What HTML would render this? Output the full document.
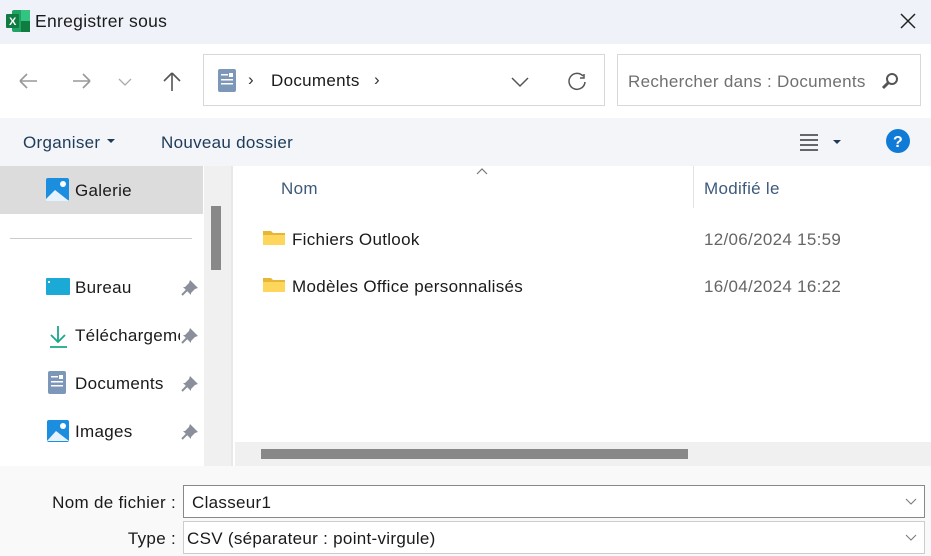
<!DOCTYPE html><html><head><meta charset="utf-8"><style>
*{margin:0;padding:0;box-sizing:border-box}
body{width:931px;height:556px;position:relative;overflow:hidden;font-family:"Liberation Sans",sans-serif;font-size:17px;letter-spacing:0.3px;color:#1a1a1a;background:#fff}
.a{position:absolute;white-space:nowrap}
</style></head><body>
<div class="a" style="left:0;top:0;width:931px;height:44px;background:#eff3f9"></div>
<svg class="a" style="left:6px;top:10px" width="24" height="22"><rect x="6" y="0" width="18" height="22" rx="2" fill="#21a366"/><rect x="15" y="0" width="9" height="11" fill="#33c481"/><rect x="15" y="11" width="9" height="11" fill="#107c41"/><rect x="0" y="4" width="13" height="14" rx="1" fill="#107c41"/><text x="3" y="15" font-size="11" font-weight="bold" fill="#fff" font-family="Liberation Sans">X</text></svg>
<div class="a" style="left:35px;top:11px;font-size:17.5px">Enregistrer sous</div>
<svg class="a" style="left:900px;top:13px" width="16" height="16"><path d="M1 1L15 15M15 1L1 15" stroke="#222" stroke-width="1.5"/></svg>
<svg class="a" style="left:16px;top:70px" width="180" height="24" fill="none" stroke-width="1.6"><path d="M4 11H21M4 11L11 4M4 11L11 18" stroke="#999"/><path d="M57 11H74M74 11L67 4M74 11L67 18" stroke="#999"/><path d="M103 9L109 15L115 9" stroke="#aaa" stroke-width="1.3"/><path d="M156 3V21M156 3L148 11M156 3L164 11" stroke="#555"/></svg>
<div class="a" style="left:203px;top:54px;width:402px;height:52px;border:1px solid #d8d8d8"></div>
<svg class="a" style="left:218px;top:69px" width="20" height="24"><rect x="0" y="0" width="18" height="23" rx="2" fill="#7d97b8"/><rect x="3" y="5" width="7" height="1.5" fill="#fff"/><rect x="11" y="4" width="4" height="4" fill="#fff"/><rect x="3" y="10" width="12" height="1.5" fill="#fff"/><rect x="3" y="14" width="12" height="1.5" fill="#fff"/></svg>
<div class="a" style="left:248px;top:70px;color:#333">›</div>
<div class="a" style="left:271px;top:71px">Documents</div>
<div class="a" style="left:374px;top:70px;color:#333">›</div>
<svg class="a" style="left:510px;top:72px" width="80" height="20" fill="none" stroke="#555" stroke-width="1.5"><path d="M2 6L10 14L18 6"/><path d="M73 4A8 8 0 1 0 75 10M74 2V6H70"/></svg>
<div class="a" style="left:617px;top:54px;width:304px;height:52px;border:1px solid #d8d8d8"></div>
<div class="a" style="left:628px;top:72px;color:#707070">Rechercher dans : Documents</div>
<svg class="a" style="left:881px;top:72px" width="20" height="20"><circle cx="11" cy="7" r="5" fill="none" stroke="#555" stroke-width="2"/><path d="M8 10L2 16" stroke="#555" stroke-width="3"/></svg>
<div class="a" style="left:0;top:118px;width:931px;height:48px;background:#f3f5f8"></div>
<div class="a" style="left:23px;top:133px;color:#1e3b5a">Organiser</div>
<svg class="a" style="left:107px;top:139px" width="10" height="6"><path d="M0 0H8L4 4Z" fill="#1e3b5a"/></svg>
<div class="a" style="left:161px;top:133px;color:#1e3b5a">Nouveau dossier</div>
<svg class="a" style="left:799px;top:132px" width="48" height="20"><path d="M1 3H19M1 8H19M1 13H19M1 18H19" stroke="#111" stroke-width="1.2"/><path d="M34 8H42L38 12Z" fill="#1e3b5a"/></svg>
<svg class="a" style="left:886px;top:129px" width="24" height="24"><circle cx="12" cy="12" r="12" fill="#0f7bd6"/><text x="7" y="18" font-size="16" font-weight="bold" fill="#fff" font-family="Liberation Sans">?</text></svg>
<div class="a" style="left:0;top:166px;width:203px;height:48px;background:#dcdcdc"></div>
<svg class="a" style="left:46px;top:178px" width="24" height="25"><rect x="0" y="0" width="23" height="23" rx="2" fill="#1b8ee0"/><path d="M0 21L9 12L23 23H0Z" fill="#e6f3ff"/><circle cx="17" cy="6" r="3" fill="#fff"/></svg>
<div class="a" style="left:75px;top:181px">Galerie</div>
<div class="a" style="left:10px;top:238px;width:182px;height:1px;background:#ccc"></div>
<div class="a" style="left:204px;top:166px;width:27px;height:300px;background:#f0f0f0"></div>
<div class="a" style="left:211px;top:206px;width:10px;height:64px;background:#888"></div>
<div class="a" style="left:231px;top:166px;width:2px;height:300px;background:#e8e8e8"></div>
<svg class="a" style="left:46px;top:278px" width="24" height="18"><rect width="24" height="17" rx="1" fill="#1ba9d6"/><rect x="2" y="3" width="2" height="2" fill="#fff"/></svg>
<div class="a" style="left:75px;top:278px">Bureau</div>
<svg class="a" style="left:49px;top:325px" width="20" height="24" fill="none" stroke="#1aa88a" stroke-width="1.8"><path d="M9 1V17M2 10L9 17L16 10M1 22H18"/></svg>
<div class="a" style="left:75px;top:326px;width:105px;overflow:hidden">Téléchargements</div>
<svg class="a" style="left:48px;top:371px" width="20" height="24"><rect x="0" y="0" width="18" height="23" rx="2" fill="#7d97b8"/><rect x="3" y="5" width="7" height="1.5" fill="#fff"/><rect x="11" y="4" width="4" height="4" fill="#fff"/><rect x="3" y="10" width="12" height="1.5" fill="#fff"/><rect x="3" y="14" width="12" height="1.5" fill="#fff"/></svg>
<div class="a" style="left:75px;top:374px">Documents</div>
<svg class="a" style="left:47px;top:420px" width="22" height="22"><rect width="22" height="22" rx="2" fill="#1b8ee0"/><path d="M0 21L9 11L22 21Z" fill="#e6f3ff"/><circle cx="16" cy="6" r="3" fill="#fff"/></svg>
<div class="a" style="left:75px;top:422px">Images</div>
<svg class="a" style="left:181px;top:278px" width="20" height="170" fill="#8a9099"><g id="p"><path d="M9 2L17 10L14 11L10 15L10 17L2 9L4 9L8 5Z"/><path d="M6 12L1 17" stroke="#8a9099" stroke-width="2"/></g><use href="#p" y="48"/><use href="#p" y="96"/><use href="#p" y="144"/></svg>
<svg class="a" style="left:476px;top:168px" width="12" height="8"><path d="M1 6L6 1L11 6" fill="none" stroke="#777" stroke-width="1.2"/></svg>
<div class="a" style="left:281px;top:179px;color:#3d5a7a">Nom</div>
<div class="a" style="left:693px;top:166px;width:1px;height:42px;background:#e3e3e3"></div>
<div class="a" style="left:704px;top:179px;color:#3d5a7a">Modifié le</div>
<svg class="a" style="left:263px;top:229px" width="24" height="70"><g id="f"><path d="M0 2H8L10 4H22V16H0Z" fill="#e8b636"/><path d="M0 6H22V16H0Z" fill="#ffd65c"/></g><use href="#f" y="47"/></svg>
<div class="a" style="left:292px;top:230px">Fichiers Outlook</div>
<div class="a" style="left:704px;top:230px;color:#666">12/06/2024 15:59</div>
<div class="a" style="left:292px;top:277px">Modèles Office personnalisés</div>
<div class="a" style="left:704px;top:277px;color:#666">16/04/2024 16:22</div>
<div class="a" style="left:235px;top:442px;width:696px;height:24px;background:#f0f0f0"></div>
<div class="a" style="left:261px;top:449px;width:427px;height:10px;background:#888"></div>
<div class="a" style="left:0;top:466px;width:931px;height:90px;background:#f9f9f9"></div>
<div class="a" style="right:755px;top:493px">Nom de fichier :</div>
<div class="a" style="left:183px;top:485px;width:742px;height:33px;background:#fff;border:1px solid #888;padding:7px 0 0 8px">Classeur1</div>
<div class="a" style="right:755px;top:529px">Type :</div>
<div class="a" style="left:183px;top:521px;width:742px;height:33px;background:#fff;border:1px solid #ccc;padding:7px 0 0 3px">CSV (séparateur : point-virgule)</div>
<svg class="a" style="left:905px;top:497px" width="14" height="50" fill="none" stroke="#777"><path d="M1 2L6 7L11 2M1 38L6 43L11 38"/></svg>
</body></html>
